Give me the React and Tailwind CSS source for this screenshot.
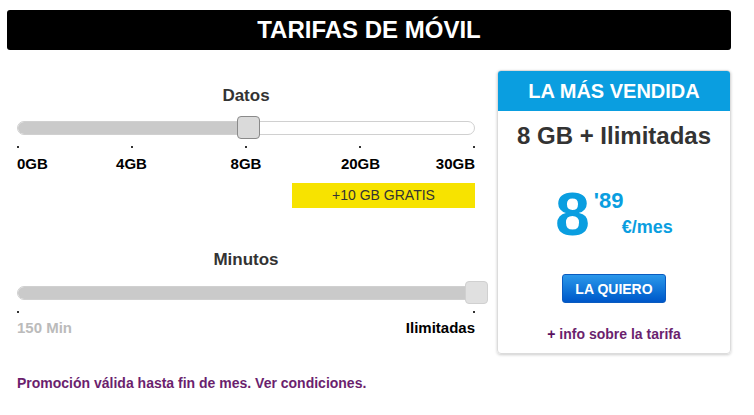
import React from "react";

const font = { fontFamily: '"Liberation Sans", Arial, sans-serif' };

function Ticks({ count }) {
  return (
    <div className="flex justify-between h-[2px] mt-[7px]">
      {Array.from({ length: count }).map((_, i) => (
        <div key={i} className="w-[2px] h-[2px] bg-[#333]" />
      ))}
    </div>
  );
}

function Track({ pct, handleClass }) {
  return (
    <div className="relative h-[23px] flex items-center">
      <div className="w-full h-[14px] rounded-full border border-[#d0d0d0] bg-white overflow-hidden flex">
        <div className="h-full bg-[#cacaca]" style={{ width: pct + "%" }} />
      </div>
      <div className={"absolute top-0 w-[23px] h-[23px] rounded-[4px] bg-[#dadada] " + handleClass} />
    </div>
  );
}

export default function App() {
  return (
    <div className="w-[754px] h-[415px] bg-white pt-[10px] px-[7px]" style={font}>
      <div className="w-[724px] h-[40px] bg-black rounded-[3px] flex items-center justify-center">
        <span className="text-white font-bold text-[24px] leading-none">TARIFAS DE MÓVIL</span>
      </div>
      <div className="flex mt-[20px]">
        <div className="w-[458px] ml-[10px] flex flex-col">
          <div className="mt-[14px] text-center text-[17px] font-bold leading-[24px] text-[#333]">Datos</div>
          <div className="mt-[8px]">
            <Track pct={50} handleClass="left-[calc(50%-9px)] border border-[#8a8a8a]" />
          </div>
          <Ticks count={5} />
          <div className="flex justify-between mt-[8px] text-[15px] font-bold leading-[16px] text-black">
            <div className="w-0 flex justify-start whitespace-nowrap">0GB</div>
            <div className="w-0 flex justify-center whitespace-nowrap">4GB</div>
            <div className="w-0 flex justify-center whitespace-nowrap">8GB</div>
            <div className="w-0 flex justify-center whitespace-nowrap">20GB</div>
            <div className="w-0 flex justify-end whitespace-nowrap">30GB</div>
          </div>
          <div className="flex justify-end mt-[11px]">
            <div className="w-[183px] h-[25px] bg-[#f7e300] flex items-center justify-center text-[14px] text-[#333]">
              +10 GB GRATIS
            </div>
          </div>
          <div className="mt-[40px] text-center text-[17px] font-bold leading-[24px] text-[#333]">Minutos</div>
          <div className="mt-[9px]">
            <Track pct={100} handleClass="left-[calc(100%-10px)] border border-[#d0d0d0] bg-[#e0e0e0]" />
          </div>
          <Ticks count={2} />
          <div className="flex justify-between mt-[7px] text-[15px] font-bold leading-[16px]">
            <span className="text-[#bbbbbb]">150 Min</span>
            <span className="text-black">Ilimitadas</span>
          </div>
          <div className="mt-[39px] text-[14px] font-bold leading-[16px] text-[#6b1f6e]">
            Promoción válida hasta fin de mes. Ver condiciones.
          </div>
        </div>
        <div className="ml-[22px] w-[234px] h-[284px] rounded-[4px] border border-[#dcdcdc] shadow-[0_1px_3px_rgba(0,0,0,0.2)] flex flex-col items-center overflow-hidden">
          <div className="w-full h-[40px] bg-[#0a9ee0] flex items-center justify-center shrink-0">
            <span className="text-white font-bold text-[20px] leading-none">LA MÁS VENDIDA</span>
          </div>
          <div className="mt-[11px] text-[24px] font-bold leading-[28px] text-[#333]">8 GB + Ilimitadas</div>
          <div className="mt-[33px] flex items-start text-[#0a9ee0] font-bold">
            <span className="text-[62px] leading-none">8</span>
            <div className="ml-[4px] mt-[7px] flex flex-col">
              <span className="text-[22px] leading-none">'89</span>
              <span className="mt-[6px] ml-[28px] text-[18px] leading-none">€/mes</span>
            </div>
          </div>
          <div className="mt-[29px] w-[104px] h-[29px] rounded-[3px] border border-[#0a5bc0] bg-gradient-to-b from-[#2b98ea] to-[#0057c9] flex items-center justify-center text-white font-bold text-[14px] leading-none">
            LA QUIERO
          </div>
          <div className="mt-[23px] text-[14px] font-bold leading-[16px] text-[#6b1f6e]">
            <span className="text-[#5a1060]">+</span> info sobre la tarifa
          </div>
        </div>
      </div>
    </div>
  );
}
